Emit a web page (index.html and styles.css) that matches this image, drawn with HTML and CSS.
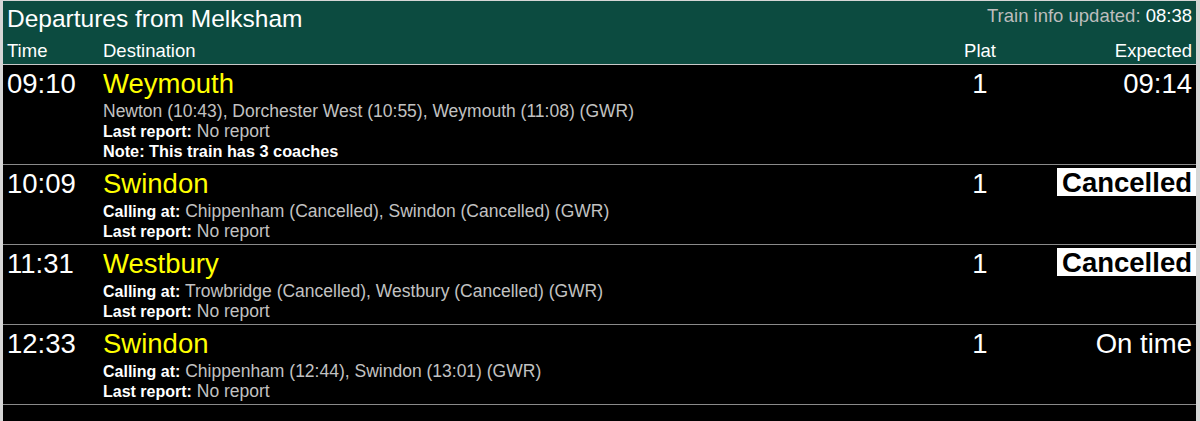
FILE: index.html
```html
<!DOCTYPE html>
<html>
<head>
<meta charset="utf-8">
<link rel="stylesheet" href="styles.css">
</head>
<body>
<div class="board">
  <div class="head">
    <div class="title-row">
      <div class="title">Departures from Melksham</div>
      <div class="updated">Train info updated: <span class="upd-time">08:38</span></div>
    </div>
    <div class="cols">
      <div>Time</div>
      <div>Destination</div>
      <div class="c-plat">Plat</div>
      <div class="c-exp">Expected</div>
    </div>
  </div>

  <div class="row">
    <div class="time">09:10</div>
    <div class="dest">
      <div class="dname">Weymouth</div>
      <div class="info"><span class="val">Newton (10:43), Dorchester West (10:55), Weymouth (11:08) (GWR)</span></div>
      <div class="info"><span class="lbl">Last report:</span> <span class="val">No report</span></div>
      <div class="info"><span class="lbl note">Note: This train has 3 coaches</span></div>
    </div>
    <div class="plat">1</div>
    <div class="exp">09:14</div>
  </div>

  <div class="row">
    <div class="time">10:09</div>
    <div class="dest">
      <div class="dname">Swindon</div>
      <div class="info"><span class="lbl">Calling at:</span> <span class="val">Chippenham (Cancelled), Swindon (Cancelled) (GWR)</span></div>
      <div class="info"><span class="lbl">Last report:</span> <span class="val">No report</span></div>
    </div>
    <div class="plat">1</div>
    <div class="exp"><span class="cancel">Cancelled</span></div>
  </div>

  <div class="row">
    <div class="time">11:31</div>
    <div class="dest">
      <div class="dname">Westbury</div>
      <div class="info"><span class="lbl">Calling at:</span> <span class="val">Trowbridge (Cancelled), Westbury (Cancelled) (GWR)</span></div>
      <div class="info"><span class="lbl">Last report:</span> <span class="val">No report</span></div>
    </div>
    <div class="plat">1</div>
    <div class="exp"><span class="cancel">Cancelled</span></div>
  </div>

  <div class="row">
    <div class="time">12:33</div>
    <div class="dest">
      <div class="dname">Swindon</div>
      <div class="info"><span class="lbl">Calling at:</span> <span class="val">Chippenham (12:44), Swindon (13:01) (GWR)</span></div>
      <div class="info"><span class="lbl">Last report:</span> <span class="val">No report</span></div>
    </div>
    <div class="plat">1</div>
    <div class="exp">On time</div>
  </div>
</div>
</body>
</html>
```

FILE: styles.css
```css
html, body {
  margin: 0;
  padding: 0;
}
body {
  background: #d6d6d6;
  font-family: "Liberation Sans", Arial, Helvetica, sans-serif;
  color: #fff;
  padding: 1px 4px 0 3px;
}
.board {
  background: #000;
  height: 420px;
  overflow: hidden;
}
.head {
  background: #0c4b40;
  border-bottom: 1px solid #c8c8c8;
}
.title-row {
  display: flex;
  justify-content: space-between;
  align-items: flex-start;
  padding: 4px 4px 0 4px;
}
.title {
  font-size: 24.5px;
  line-height: 28px;
}
.updated {
  font-size: 18.5px;
  line-height: 20px;
  margin-top: 1px;
  color: #bdbdbd;
}
.upd-time {
  color: #fff;
}
.cols,
.row {
  display: grid;
  grid-template-columns: 96px 1fr 84px 170px;
  padding: 0 4px;
}
.cols {
  font-size: 18.5px;
  line-height: 22px;
  padding-top: 7px;
  padding-bottom: 2px;
}
.c-plat {
  text-align: center;
}
.c-exp {
  text-align: right;
}
.row {
  border-bottom: 1px solid #8a8a8a;
  padding-top: 2px;
  padding-bottom: 3px;
  align-items: start;
}
.time,
.plat,
.exp,
.dname {
  font-size: 27.5px;
  line-height: 34px;
  height: 34px;
}
.plat {
  text-align: center;
}
.exp {
  text-align: right;
}
.dname {
  color: #ffff00;
}
.info {
  font-size: 17.5px;
  line-height: 20px;
  height: 20px;
  white-space: nowrap;
}
.lbl {
  font-weight: bold;
  font-size: 16px;
  color: #fff;
}
.lbl.note {
  font-size: 16.3px;
}
.val {
  color: #c2c2c2;
}
.cancel {
  display: inline-block;
  background: #fff;
  color: #000;
  font-weight: bold;
  height: 28px;
  line-height: 30px;
  padding: 0 5px;
  margin-right: -5px;
  vertical-align: top;
  margin-top: 1px;
}
```
